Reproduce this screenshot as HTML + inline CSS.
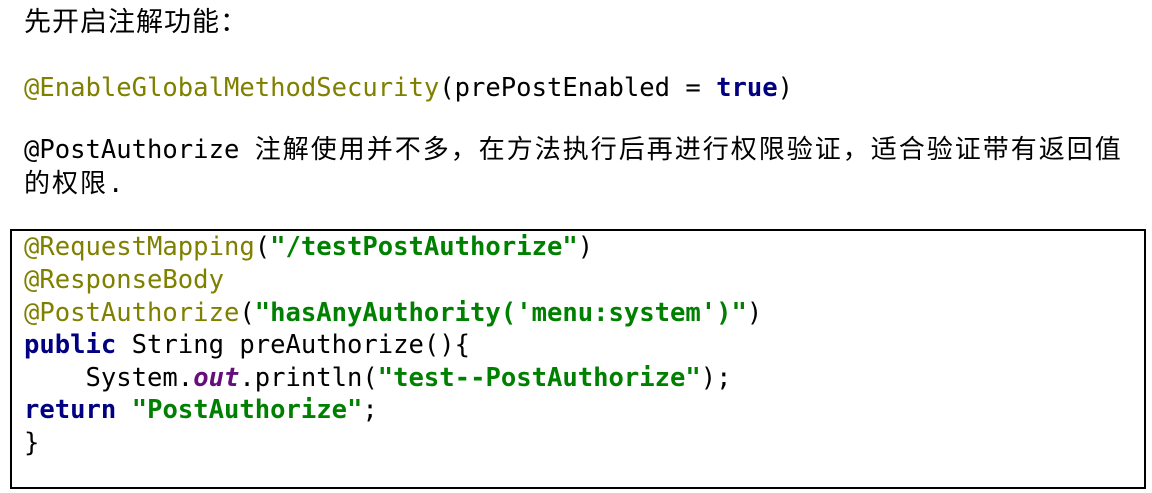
<!DOCTYPE html>
<html><head><meta charset="utf-8"><style>
body{margin:0;width:1152px;height:493px;background:#fff;position:relative;overflow:hidden}
.l{position:absolute;left:24px;height:32px;line-height:32px;white-space:pre;font-family:"DejaVu Sans Mono","Noto Sans CJK SC",monospace;font-size:25.55px;color:#000}
.c{font-family:"Noto Sans CJK SC",sans-serif;font-size:26px;letter-spacing:2px}
.a{color:#808000}.s{color:#008000;font-weight:bold}.k{color:#000080;font-weight:bold}.o{color:#660e7a;font-weight:bold;font-style:italic}
.box{position:absolute;left:10px;top:229px;width:1132px;height:256px;border:2px solid #000}
</style></head><body>
<div class="l c" style="top:4px;font-size:27px;letter-spacing:1px">先开启注解功能：</div>
<div class="l" style="top:72px"><span class="a">@EnableGlobalMethodSecurity</span>(prePostEnabled = <span class="k">true</span>)</div>
<div class="l" style="top:132px">@PostAuthorize <span class="c">注解使用并不多，在方法执行后再进行权限验证，适合验证带有返回值</span></div>
<div class="l" style="top:166px"><span class="c">的权限</span>.</div>
<div class="box"></div>
<div class="l" style="top:231px"><span class="a">@RequestMapping</span>(<span class="s">"/testPostAuthorize"</span>)</div>
<div class="l" style="top:264px"><span class="a">@ResponseBody</span></div>
<div class="l" style="top:297px"><span class="a">@PostAuthorize</span>(<span class="s">"hasAnyAuthority('menu:system')"</span>)</div>
<div class="l" style="top:329px"><span class="k">public</span> String preAuthorize(){</div>
<div class="l" style="top:362px">    System.<span class="o">out</span>.println(<span class="s">"test--PostAuthorize"</span>);</div>
<div class="l" style="top:394px"><span class="k">return</span> <span class="s">"PostAuthorize"</span>;</div>
<div class="l" style="top:427px">}</div>
</body></html>
